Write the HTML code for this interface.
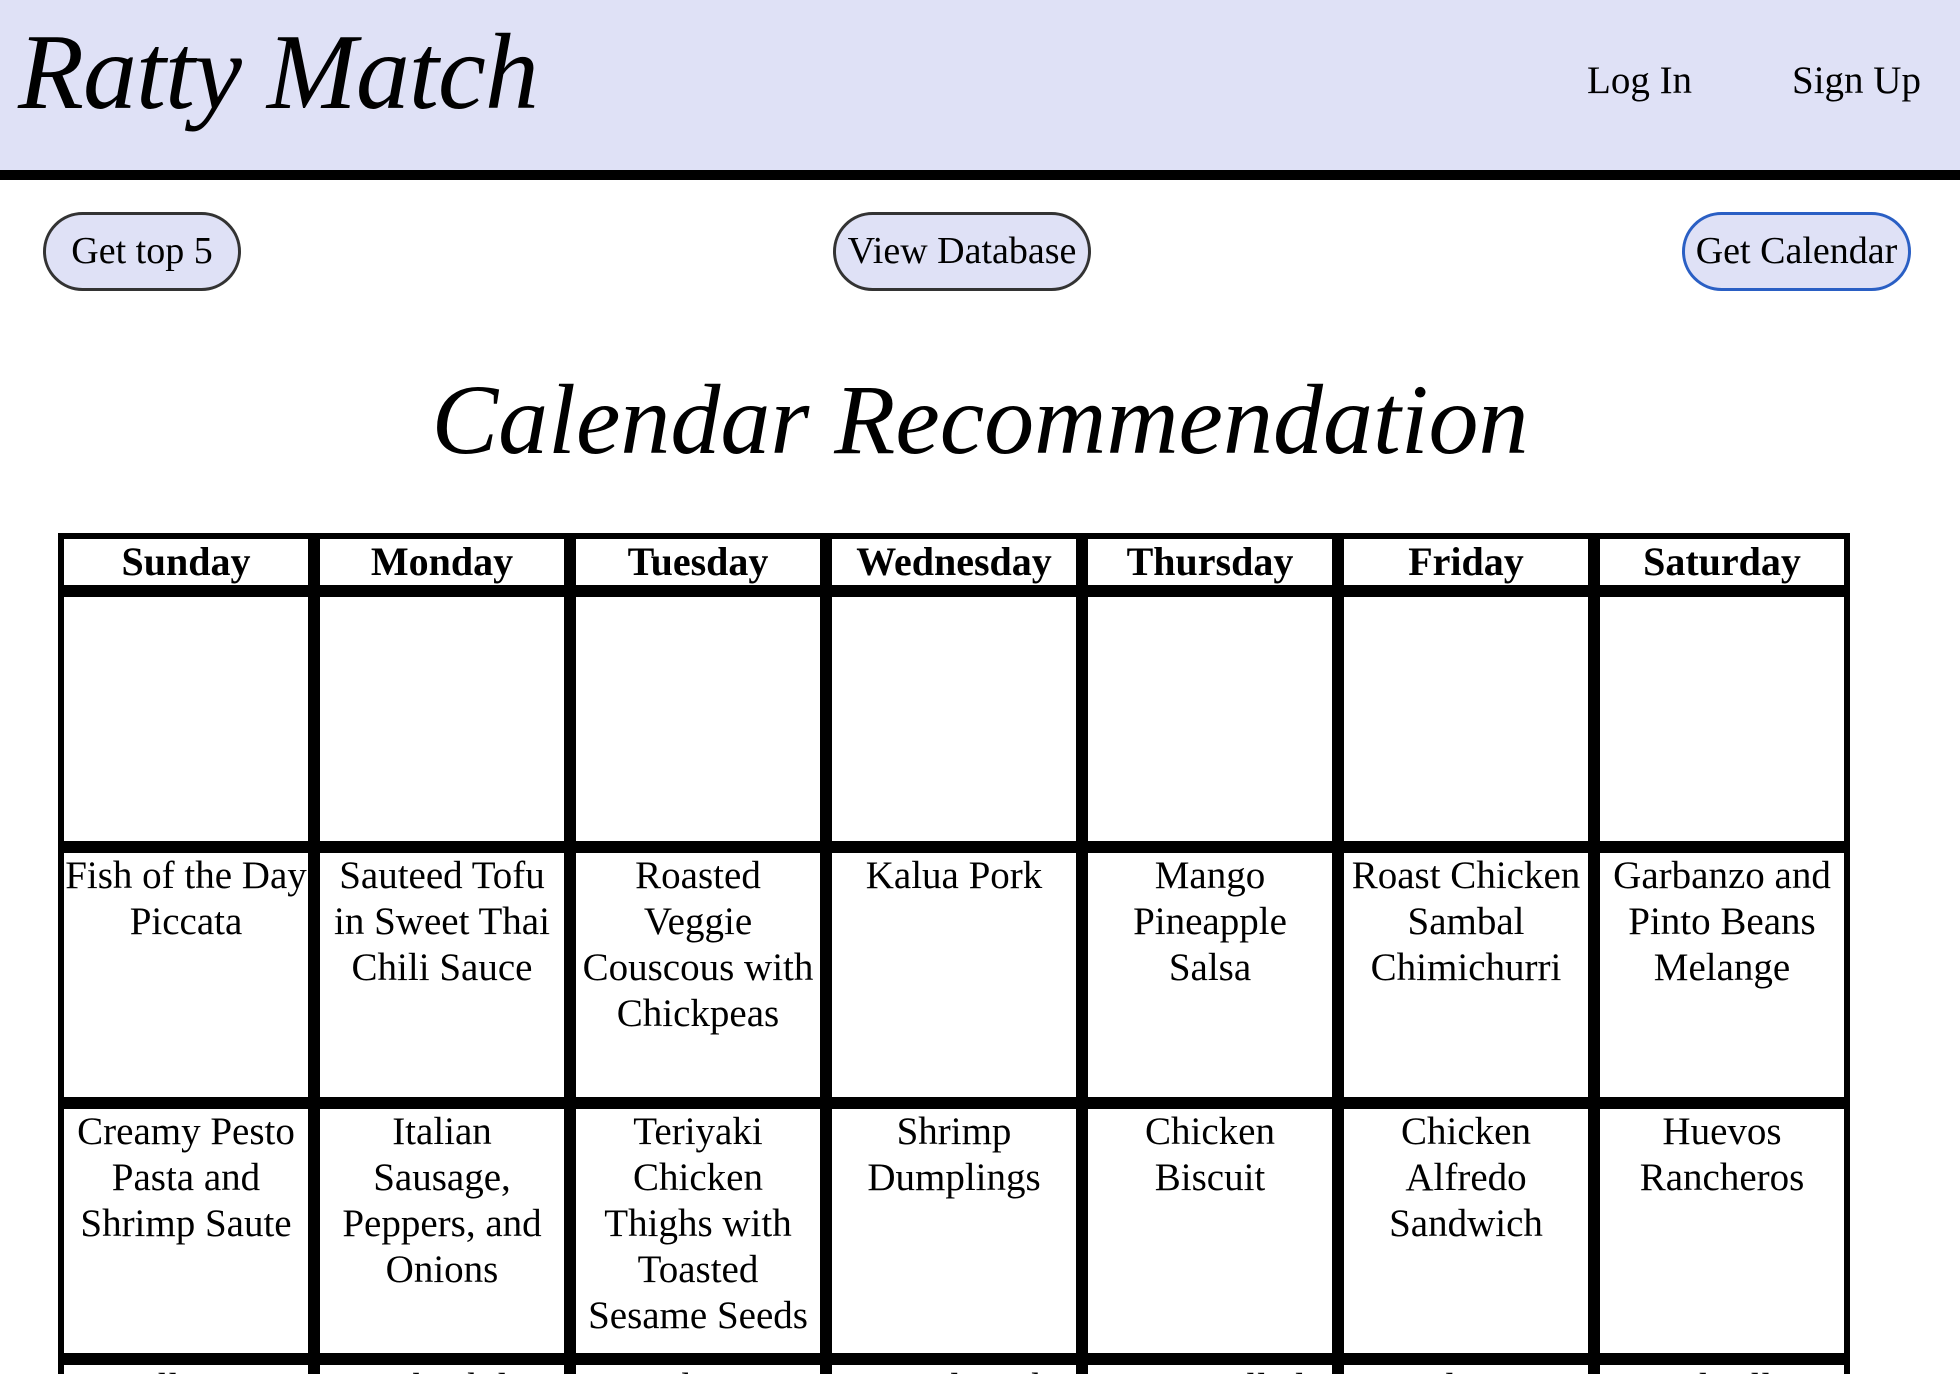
<!DOCTYPE html>
<html><head><meta charset="utf-8"><style>
*{margin:0;padding:0;box-sizing:border-box}
html,body{width:1960px;height:1374px;overflow:hidden}
body{background:#fff;font-family:"Liberation Serif",serif;color:#000;position:relative}
.wrap{position:absolute;left:0;top:0;width:1960px;height:1374px;overflow:hidden}
.hdr{position:absolute;left:0;top:0;width:1960px;height:180px;background:#dfe1f6;border-bottom:10px solid #000}
.logo{position:absolute;left:18px;top:8px;font-size:108px;font-style:italic;line-height:130px;letter-spacing:-1px}
.nav{position:absolute;top:58px;font-size:39px;line-height:46px}
.btn{position:absolute;top:212px;height:79px;border-radius:40px;background:#dfe1f6;border:3px solid #222;font-size:38px;line-height:73px;text-align:center;white-space:nowrap}
h1{position:absolute;left:0;width:1960px;top:360px;text-align:center;font-size:100px;font-style:italic;font-weight:normal;line-height:120px}
.tbl{position:absolute;left:58px;top:533px;background:#000;padding:6px 6px 0 6px;display:grid;grid-template-columns:repeat(7,244px);grid-template-rows:46px 244px 244px 244px 20px;gap:12px;height:841px;overflow:hidden}
.tbl div{background:#fff;text-align:center;font-size:39px;line-height:46px;overflow:hidden;white-space:nowrap}
.tbl .h{font-weight:bold;font-size:40px;line-height:46px}
</style></head><body><div class="wrap">
<div class="hdr">
<div class="logo">Ratty Match</div>
<div class="nav" style="left:1587px">Log In</div>
<div class="nav" style="left:1792px">Sign Up</div>
</div>
<div class="btn" style="left:43px;width:198px;border-color:#333">Get top 5</div>
<div class="btn" style="left:833px;width:258px;border-color:#333">View Database</div>
<div class="btn" style="left:1682px;width:229px;border-color:#2a5fc4">Get Calendar</div>
<h1>Calendar Recommendation</h1>
<div class="tbl">
<div class="h">Sunday</div><div class="h">Monday</div><div class="h">Tuesday</div><div class="h">Wednesday</div><div class="h">Thursday</div><div class="h">Friday</div><div class="h">Saturday</div>
<div></div><div></div><div></div><div></div><div></div><div></div><div></div>
<div>Fish of the Day<br>Piccata</div><div>Sauteed Tofu<br>in Sweet Thai<br>Chili Sauce</div><div>Roasted<br>Veggie<br>Couscous with<br>Chickpeas</div><div>Kalua Pork</div><div>Mango<br>Pineapple<br>Salsa</div><div>Roast Chicken<br>Sambal<br>Chimichurri</div><div>Garbanzo and<br>Pinto Beans<br>Melange</div>
<div>Creamy Pesto<br>Pasta and<br>Shrimp Saute</div><div>Italian<br>Sausage,<br>Peppers, and<br>Onions</div><div>Teriyaki<br>Chicken<br>Thighs with<br>Toasted<br>Sesame Seeds</div><div>Shrimp<br>Dumplings</div><div>Chicken<br>Biscuit</div><div>Chicken<br>Alfredo<br>Sandwich</div><div>Huevos<br>Rancheros</div>
<div>Halloumi</div><div>Pork Chile</div><div>Mushroom</div><div>Ravioli with</div><div>BBQ Pulled</div><div>Salmon</div><div>Cod Fillet</div>
</div>
</div></body></html>
